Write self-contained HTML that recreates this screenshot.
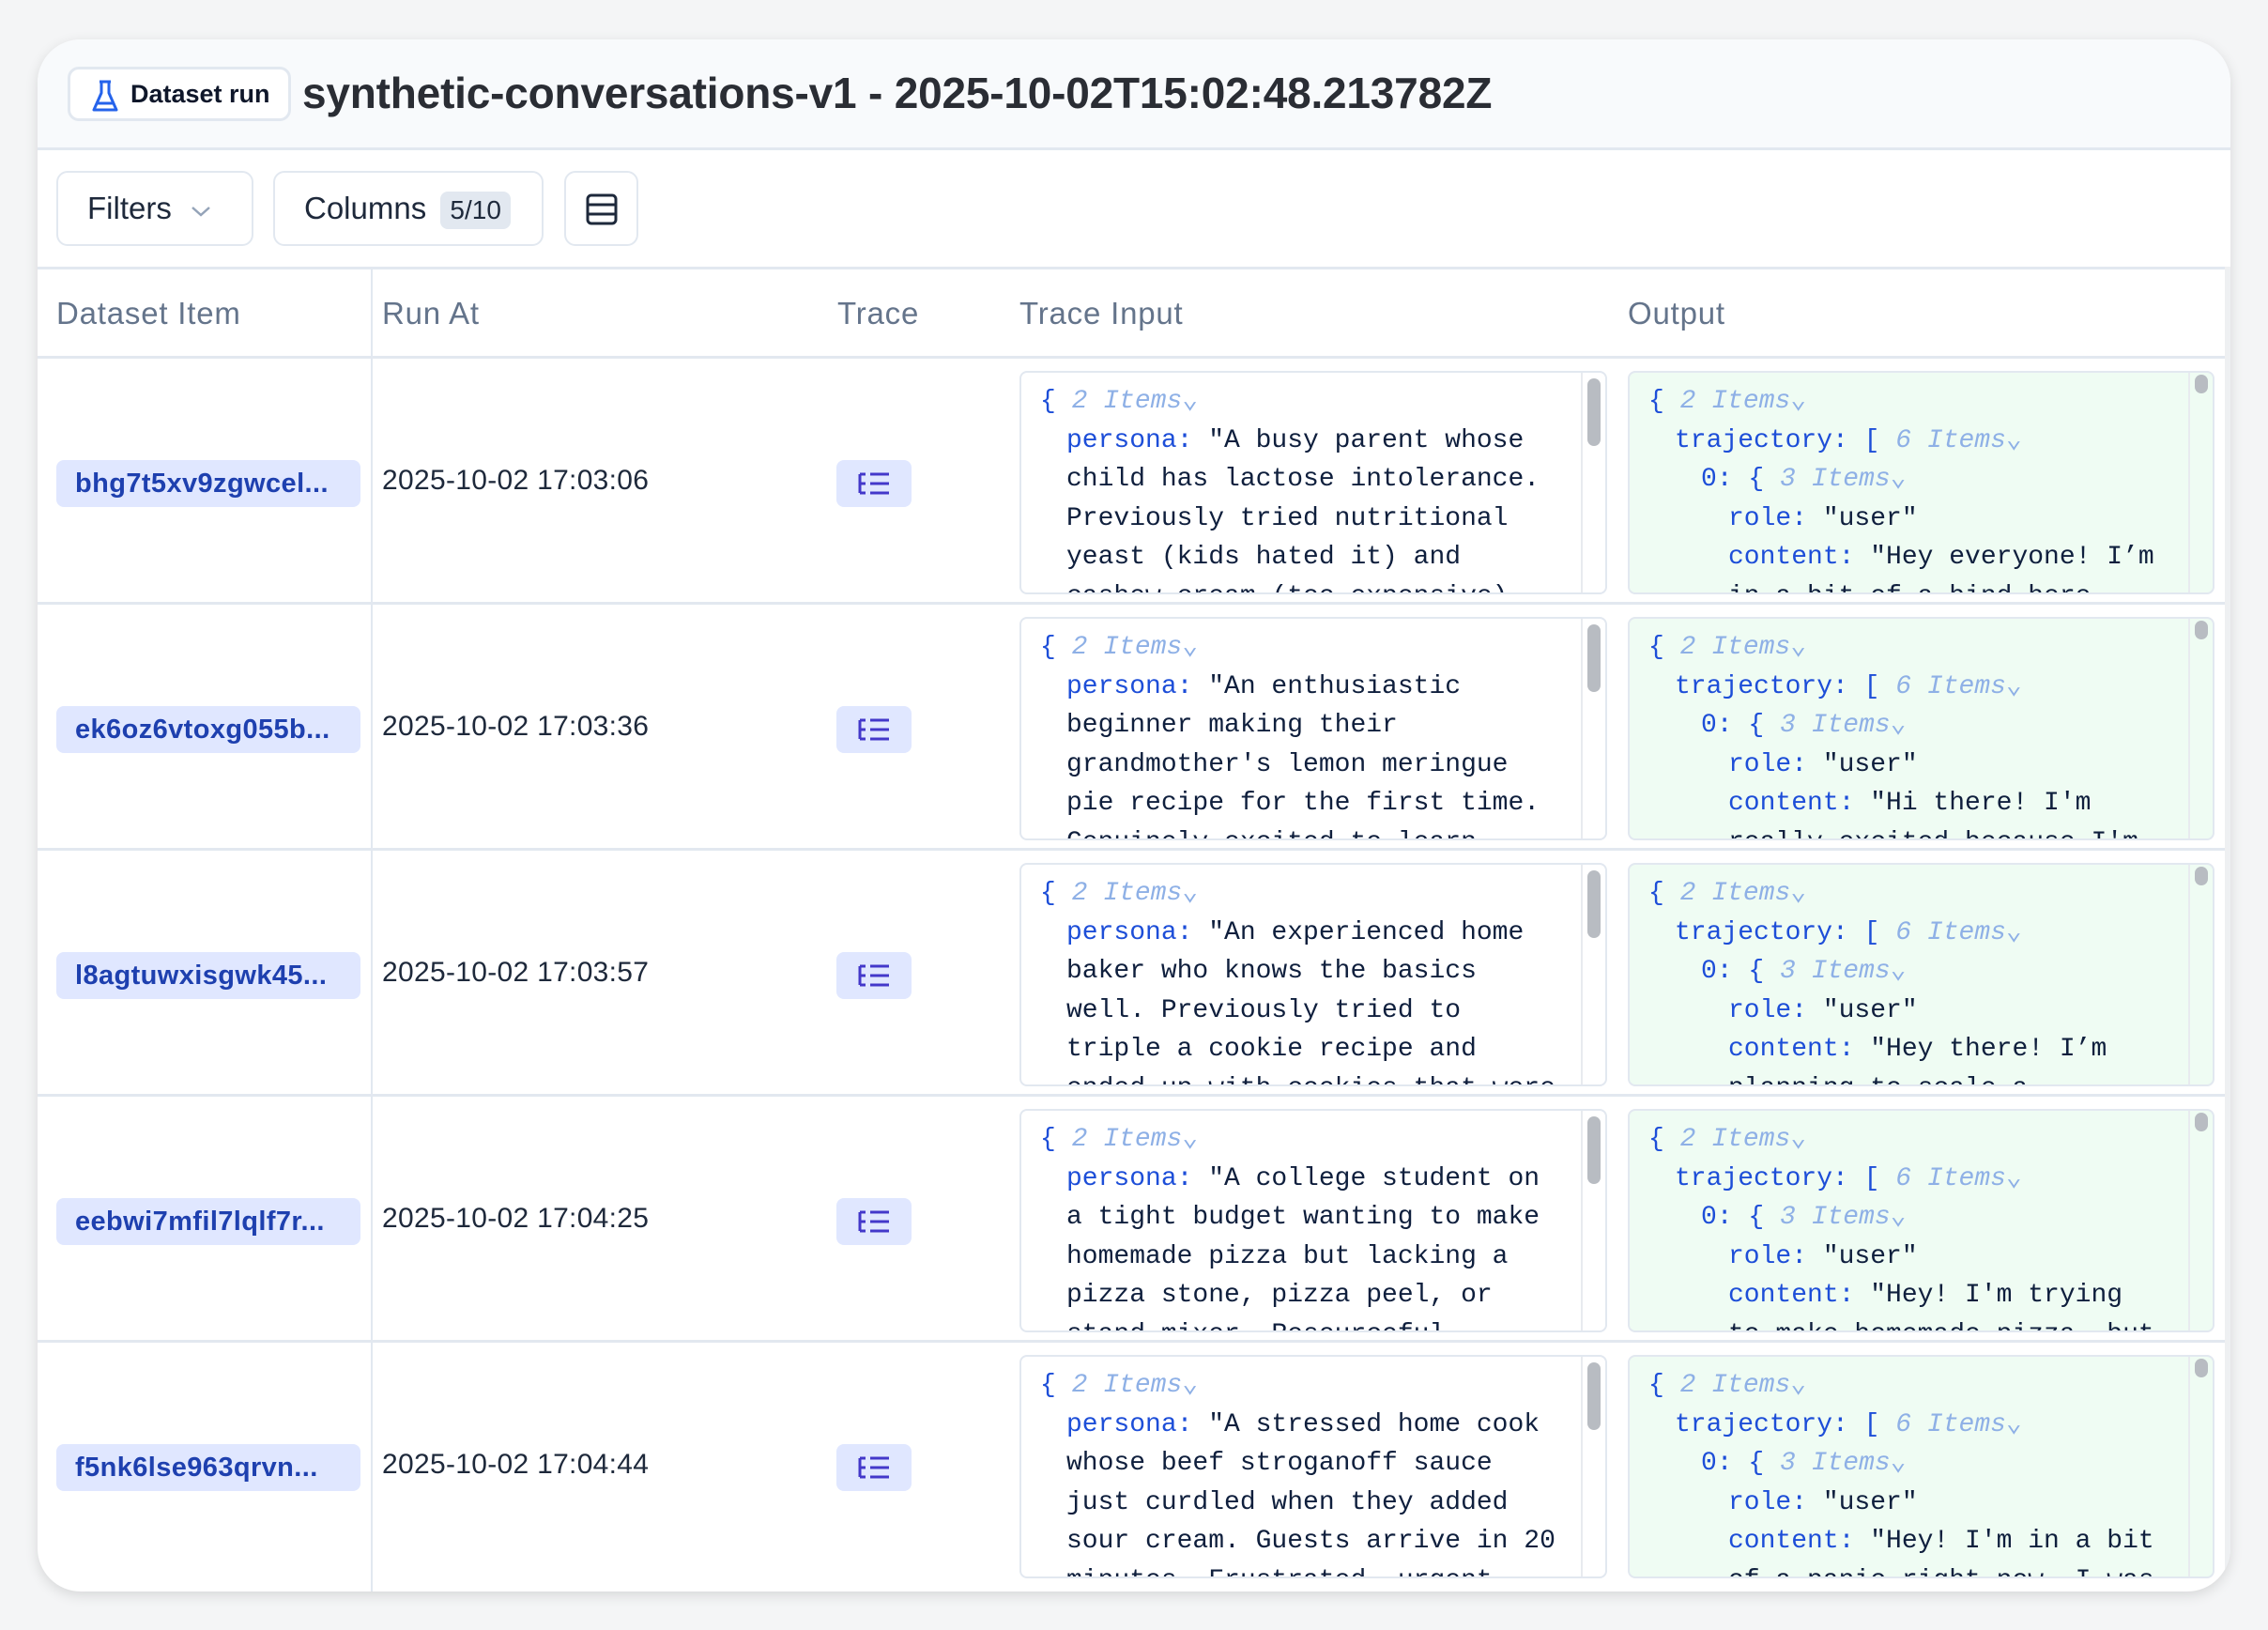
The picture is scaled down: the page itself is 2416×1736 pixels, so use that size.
<!DOCTYPE html>
<html><head><meta charset="utf-8"><style>
*{box-sizing:border-box;margin:0;padding:0}
body{width:2416px;height:1736px;background:#f4f5f6;font-family:"Liberation Sans",sans-serif;position:relative;overflow:hidden}
.card{position:absolute;left:40px;top:42px;width:2336px;height:1653px;background:#fff;border-radius:46px;box-shadow:0 4px 14px rgba(0,0,0,.12);overflow:hidden}
.hdr{position:absolute;left:0;top:0;width:100%;height:118px;background:#f8fafc;border-bottom:3px solid #e2e8f0}
.badge{position:absolute;left:32px;top:29px;width:238px;height:58px;border:3px solid #e2e8f0;border-radius:12px;background:#fff;font-weight:700;font-size:27px;color:#0f172a;line-height:52px;padding-left:64px}
.title{position:absolute;left:282px;top:30px;font-size:46px;font-weight:700;color:#2a2d34;letter-spacing:-.2px}
.btn{position:absolute;top:140px;height:80px;border:2px solid #e2e8f0;border-radius:12px;background:#fff;font-size:33px;color:#1e293b;line-height:76px}
.th{position:absolute;top:242px;height:98px;width:100%;border-top:3px solid #e2e8f0;border-bottom:3px solid #e2e8f0}
.th span{position:absolute;top:28px;font-size:33px;letter-spacing:.8px;color:#64748b}
.vline{position:absolute;left:355px;top:242px;width:2px;height:1500px;background:#e2e8f0}
.row{position:absolute;left:0;width:2330px;height:262px;border-bottom:3px solid #e2e8f0}
.id{position:absolute;left:20px;top:108px;width:324px;height:50px;background:#e0e7ff;border-radius:8px;color:#1e40af;font-weight:700;font-size:29px;letter-spacing:.4px;line-height:50px;padding-left:20px}
.date{position:absolute;left:367px;top:113px;font-size:30px;letter-spacing:.3px;color:#1e293b}
.tr{position:absolute;left:851px;top:108px;width:80px;height:50px;background:#e0e7ff;border-radius:8px}
.box{position:absolute;top:13px;width:626px;height:238px;border:2px solid #e2e8f0;border-radius:8px;overflow:hidden;font-family:"Liberation Mono",monospace;font-size:28px;line-height:41.6px;color:#0f1f3d;padding:10px 0 0 20px;white-space:pre}
.box div{height:41.6px}
.l1{padding-left:28px}.l2{padding-left:56px}.l3{padding-left:85px}
.in{left:1046px;background:#fff}
.out{left:1694px;background:#effcf3;width:625px}
.sb{position:absolute;right:0;top:0;width:26px;height:238px!important;border-left:2px solid #e8ebef}
.sb i{position:absolute;left:5px;top:6px;width:14px;height:72px;border-radius:7px;background:#b8bcc2}
.out .sb i{height:20px;top:2px}
.k{color:#1d4ed8}.b{color:#1d4ed8}.m{color:#8eb0e6;font-style:italic}
</style></head><body>
<div class="card">
<div class="hdr">
<div class="badge"><svg style="position:absolute;left:22px;top:10px" width="30" height="38" viewBox="0 0 30 38"><path d="M9 3h12M11 3v12L3 33h24L19 15V3M6 26h18" fill="none" stroke="#2563eb" stroke-width="3" stroke-linejoin="round"/></svg>Dataset run</div>
<div class="title">synthetic-conversations-v1 - 2025-10-02T15:02:48.213782Z</div>
</div>
<div class="btn" style="left:20px;width:210px;padding-left:31px">Filters <svg width="24" height="16" viewBox="0 0 24 16" style="margin-left:10px"><path d="M3 4l9 8 9-8" fill="none" stroke="#94a3b8" stroke-width="2.5"/></svg></div>
<div class="btn" style="left:251px;width:288px;padding-left:31px">Columns <span style="display:inline-block;background:#e2e8f0;border-radius:8px;padding:0 10px;line-height:40px;font-size:28px;margin-left:6px">5/10</span></div>
<div class="btn" style="left:561px;width:79px"><svg style="position:absolute;left:20px;top:21px" width="36" height="36" viewBox="0 0 36 36"><rect x="3" y="3" width="30" height="30" rx="4" fill="none" stroke="#1e293b" stroke-width="3"/><path d="M3 13h30M3 23h30" stroke="#1e293b" stroke-width="3"/></svg></div>
<div class="th"><span style="left:20px">Dataset Item</span><span style="left:367px">Run At</span><span style="left:852px">Trace</span><span style="left:1046px">Trace Input</span><span style="left:1694px">Output</span></div>
<div class="vline"></div>

<div class="row" style="top:340px"><div class="id">bhg7t5xv9zgwcel...</div><div class="date">2025-10-02 17:03:06</div><div class="tr"><svg style="position:absolute;left:22px;top:12px" width="36" height="26" viewBox="0 0 36 26"><path d="M3 3v20M3 3h6M3 13h6M3 23h6M14 3h20M14 13h20M14 23h20" stroke="#4338ca" stroke-width="3" fill="none"/></svg></div>
<div class="box in"><div><span class="b">{</span> <span class="m">2 Items⌄</span></div><div class="l1"><span class="k">persona:</span> "A busy parent whose</div><div class="l1">child has lactose intolerance.</div><div class="l1">Previously tried nutritional</div><div class="l1">yeast (kids hated it) and</div><div class="l1">cashew cream (too expensive)</div><div class="sb"><i></i></div></div>
<div class="box out"><div><span class="b">{</span> <span class="m">2 Items⌄</span></div><div class="l1"><span class="k">trajectory:</span> <span class="b">[</span> <span class="m">6 Items⌄</span></div><div class="l2"><span class="k">0:</span> <span class="b">{</span> <span class="m">3 Items⌄</span></div><div class="l3"><span class="k">role:</span> "user"</div><div class="l3"><span class="k">content:</span> "Hey everyone! I’m</div><div class="l3">in a bit of a bind here</div><div class="sb"><i></i></div></div></div>

<div class="row" style="top:602px"><div class="id">ek6oz6vtoxg055b...</div><div class="date">2025-10-02 17:03:36</div><div class="tr"><svg style="position:absolute;left:22px;top:12px" width="36" height="26" viewBox="0 0 36 26"><path d="M3 3v20M3 3h6M3 13h6M3 23h6M14 3h20M14 13h20M14 23h20" stroke="#4338ca" stroke-width="3" fill="none"/></svg></div>
<div class="box in"><div><span class="b">{</span> <span class="m">2 Items⌄</span></div><div class="l1"><span class="k">persona:</span> "An enthusiastic</div><div class="l1">beginner making their</div><div class="l1">grandmother's lemon meringue</div><div class="l1">pie recipe for the first time.</div><div class="l1">Genuinely excited to learn</div><div class="sb"><i></i></div></div>
<div class="box out"><div><span class="b">{</span> <span class="m">2 Items⌄</span></div><div class="l1"><span class="k">trajectory:</span> <span class="b">[</span> <span class="m">6 Items⌄</span></div><div class="l2"><span class="k">0:</span> <span class="b">{</span> <span class="m">3 Items⌄</span></div><div class="l3"><span class="k">role:</span> "user"</div><div class="l3"><span class="k">content:</span> "Hi there! I'm</div><div class="l3">really excited because I'm</div><div class="sb"><i></i></div></div></div>

<div class="row" style="top:864px"><div class="id">l8agtuwxisgwk45...</div><div class="date">2025-10-02 17:03:57</div><div class="tr"><svg style="position:absolute;left:22px;top:12px" width="36" height="26" viewBox="0 0 36 26"><path d="M3 3v20M3 3h6M3 13h6M3 23h6M14 3h20M14 13h20M14 23h20" stroke="#4338ca" stroke-width="3" fill="none"/></svg></div>
<div class="box in"><div><span class="b">{</span> <span class="m">2 Items⌄</span></div><div class="l1"><span class="k">persona:</span> "An experienced home</div><div class="l1">baker who knows the basics</div><div class="l1">well. Previously tried to</div><div class="l1">triple a cookie recipe and</div><div class="l1">ended up with cookies that were</div><div class="sb"><i></i></div></div>
<div class="box out"><div><span class="b">{</span> <span class="m">2 Items⌄</span></div><div class="l1"><span class="k">trajectory:</span> <span class="b">[</span> <span class="m">6 Items⌄</span></div><div class="l2"><span class="k">0:</span> <span class="b">{</span> <span class="m">3 Items⌄</span></div><div class="l3"><span class="k">role:</span> "user"</div><div class="l3"><span class="k">content:</span> "Hey there! I’m</div><div class="l3">planning to scale a</div><div class="sb"><i></i></div></div></div>

<div class="row" style="top:1126px"><div class="id">eebwi7mfil7lqlf7r...</div><div class="date">2025-10-02 17:04:25</div><div class="tr"><svg style="position:absolute;left:22px;top:12px" width="36" height="26" viewBox="0 0 36 26"><path d="M3 3v20M3 3h6M3 13h6M3 23h6M14 3h20M14 13h20M14 23h20" stroke="#4338ca" stroke-width="3" fill="none"/></svg></div>
<div class="box in"><div><span class="b">{</span> <span class="m">2 Items⌄</span></div><div class="l1"><span class="k">persona:</span> "A college student on</div><div class="l1">a tight budget wanting to make</div><div class="l1">homemade pizza but lacking a</div><div class="l1">pizza stone, pizza peel, or</div><div class="l1">stand mixer. Resourceful</div><div class="sb"><i></i></div></div>
<div class="box out"><div><span class="b">{</span> <span class="m">2 Items⌄</span></div><div class="l1"><span class="k">trajectory:</span> <span class="b">[</span> <span class="m">6 Items⌄</span></div><div class="l2"><span class="k">0:</span> <span class="b">{</span> <span class="m">3 Items⌄</span></div><div class="l3"><span class="k">role:</span> "user"</div><div class="l3"><span class="k">content:</span> "Hey! I'm trying</div><div class="l3">to make homemade pizza, but</div><div class="sb"><i></i></div></div></div>

<div class="row" style="top:1388px;border-bottom:none"><div class="id">f5nk6lse963qrvn...</div><div class="date">2025-10-02 17:04:44</div><div class="tr"><svg style="position:absolute;left:22px;top:12px" width="36" height="26" viewBox="0 0 36 26"><path d="M3 3v20M3 3h6M3 13h6M3 23h6M14 3h20M14 13h20M14 23h20" stroke="#4338ca" stroke-width="3" fill="none"/></svg></div>
<div class="box in"><div><span class="b">{</span> <span class="m">2 Items⌄</span></div><div class="l1"><span class="k">persona:</span> "A stressed home cook</div><div class="l1">whose beef stroganoff sauce</div><div class="l1">just curdled when they added</div><div class="l1">sour cream. Guests arrive in 20</div><div class="l1">minutes. Frustrated, urgent</div><div class="sb"><i></i></div></div>
<div class="box out"><div><span class="b">{</span> <span class="m">2 Items⌄</span></div><div class="l1"><span class="k">trajectory:</span> <span class="b">[</span> <span class="m">6 Items⌄</span></div><div class="l2"><span class="k">0:</span> <span class="b">{</span> <span class="m">3 Items⌄</span></div><div class="l3"><span class="k">role:</span> "user"</div><div class="l3"><span class="k">content:</span> "Hey! I'm in a bit</div><div class="l3">of a panic right now. I was</div><div class="sb"><i></i></div></div></div>
<div style="position:absolute;right:0;top:242px;width:6px;height:1420px;background:#eef0f2"></div>
</div>
</body></html>
